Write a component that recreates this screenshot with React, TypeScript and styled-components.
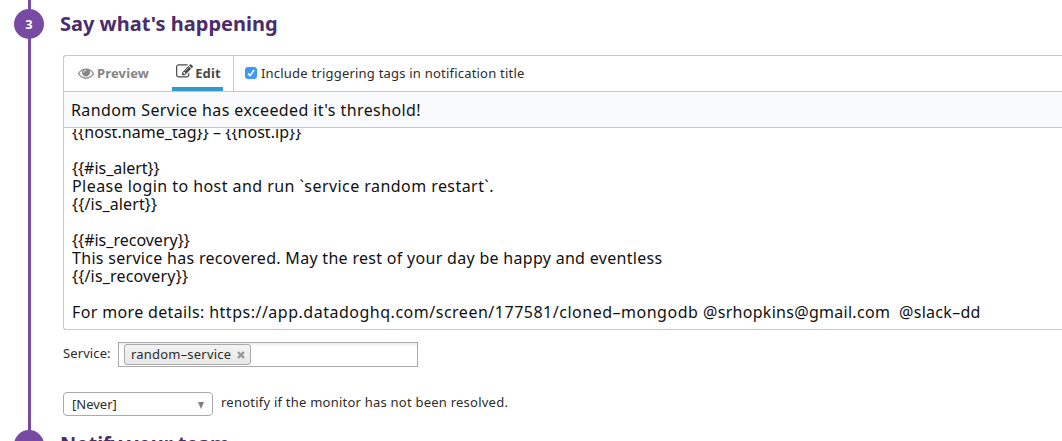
import React from 'react';
import styled, { createGlobalStyle, css } from 'styled-components';

const Global = createGlobalStyle`
  * { box-sizing: border-box; }
  html, body { margin: 0; height: 100%; overflow: hidden; background: #fff; }
  body { font-family: 'Noto Sans', 'Open Sans', sans-serif; font-size: 13px; color: #2c2c2c; }
`;

const Steps = styled.main`
  height: 441px;
  padding-top: 9px;
  overflow: hidden;
  background: linear-gradient(#774aa4, #774aa4) 28px 0 / 3px 100% no-repeat;
`;

const Step = styled.section`
  display: grid;
  grid-template-columns: 46px 1fr;
  padding-left: 14px;
  height: 421px;
`;

const StepNumber = styled.span`
  display: flex;
  align-items: center;
  justify-content: center;
  width: 30px;
  height: 30px;
  border-radius: 50%;
  background: #774aa4;
  color: #fff;
  font-size: 13px;
  font-weight: 700;
`;

const Heading = styled.h2`
  margin: 0;
  font-size: 20px;
  line-height: 30px;
  font-weight: 700;
  color: #4b2c6c;
`;

const TeamHeading = styled(Heading)`
  line-height: 28px;
  letter-spacing: -0.1px;
`;

const StepBody = styled.div`
  padding-left: 3px;
`;

const Editor = styled.div`
  margin-top: 16px;
  height: 275px;
  border: 1px solid #c8c8c8;
  border-right: 0;
  border-radius: 3px 0 0 3px;
  overflow: hidden;
`;

const Toolbar = styled.div`
  display: flex;
  height: 36px;
  border-bottom: 1px solid #c8c8c8;
`;

const Tabs = styled.div`
  display: flex;
  width: 170px;
  padding-left: 12px;
  border-right: 1px solid #c8c8c8;
`;

const Tab = styled.div<{ $active?: boolean }>`
  display: flex;
  align-items: center;
  height: 35px;
  padding: 0 3px 2px 2px;
  font-weight: 700;
  color: #858585;
  letter-spacing: 0.15px;
  ${(p) =>
    p.$active &&
    css`
      margin-left: 20px;
      padding: 2px 2px 0 4px;
      color: #4a4a4a;
      border-bottom: 4px solid #3299cc;
    `}
`;

const EyeIcon = styled.svg`
  width: 16px;
  height: 16px;
  margin-right: 3px;
  fill: currentColor;
`;

const PencilIcon = styled.svg`
  width: 17px;
  height: 17px;
  margin: -2px 2px 0 0;
  fill: currentColor;
`;

const Option = styled.label`
  display: flex;
  align-items: center;
  padding: 0 0 2px 11px;
  letter-spacing: 0.21px;
`;

const Check = styled.span`
  display: flex;
  align-items: center;
  justify-content: center;
  width: 12px;
  height: 12px;
  margin-right: 4px;
  border-radius: 3px;
  background: #3b99fc;
`;

const TitleField = styled.div`
  height: 36px;
  padding-left: 7px;
  border-bottom: 1px solid #c8c8c8;
  background: #f9fafc;
  color: #111;
  font-size: 16px;
  line-height: 36px;
  letter-spacing: 0.4px;
`;

const Message = styled.div`
  margin-top: 1px;
  height: 200px;
  overflow: hidden;
  padding-left: 8px;
  color: #111;
  font-size: 16px;
`;

const Lines = styled.div`
  margin-top: -6px;
`;

const Line = styled.div`
  height: 18px;
  line-height: 18px;
  white-space: pre;
`;

const Run = styled.span<{ $tracking: number }>`
  letter-spacing: ${(p) => p.$tracking}px;
`;

const ServiceRow = styled.div`
  display: flex;
  margin-top: 12px;
  height: 25px;
`;

const ServiceLabel = styled.span`
  width: 55px;
  line-height: 23px;
  letter-spacing: 0.1px;
`;

const TokenInput = styled.div`
  width: 300px;
  height: 25px;
  padding: 1px 5px;
  border: 1px solid #aaa;
  background: linear-gradient(#eee 0, #fff 4px);
`;

const Token = styled.span`
  display: inline-flex;
  align-items: center;
  width: 127px;
  height: 21px;
  padding-left: 6px;
  border: 1px solid #aaa;
  border-radius: 3px;
  background: linear-gradient(#f3f3f3, #e9e9e9);
  letter-spacing: 0.2px;
  line-height: 19px;
`;

const Remove = styled.svg`
  width: 8px;
  height: 8px;
  margin-left: 6px;
  stroke: #969696;
  stroke-width: 2.4;
`;

const RenotifyRow = styled.div`
  display: flex;
  margin-top: 25px;
`;

const Select = styled.div`
  display: flex;
  align-items: center;
  justify-content: space-between;
  width: 150px;
  height: 24px;
  padding: 0 8px;
  border: 1px solid #aaa;
  border-radius: 4px;
`;

const Arrow = styled.svg`
  width: 6px;
  height: 7px;
  margin-top: 2px;
  fill: #808080;
`;

const Hint = styled.span`
  margin-left: 8px;
  line-height: 21px;
  letter-spacing: 0.23px;
`;

type TextRun = [text: string, tracking: number];

const message: TextRun[][] = [
  [['{{host.name_tag}} – {{host.ip}}', 0.04]],
  [],
  [['{{#is_alert}}', -0.03]],
  [['Please login to host and run `service random restart`.', 0.44]],
  [['{{/is_alert}}', 0.12]],
  [],
  [['{{#is_recovery}}', 0]],
  [['This service has recovered. May the rest of your day be happy and eventless', 0.3]],
  [['{{/is_recovery}}', 0.17]],
  [],
  [
    ['For more details: ', 0.35],
    ['https://app.datadoghq.com/screen/177581/cloned–mongodb ', 0.51],
    ['@srhopkins@gmail.com  @slack–dd', 0.29],
  ],
];

export default function App() {
  return (
    <>
      <Global />
      <Steps>
        <Step>
          <StepNumber>3</StepNumber>
          <div>
            <Heading>Say what's happening</Heading>
            <StepBody>
              <Editor>
                <Toolbar>
                  <Tabs>
                    <Tab>
                      <EyeIcon viewBox="0 0 1792 1792">
                        <path d="M1664 960q-152-236-381-353 61 104 61 225 0 185-131.5 316.5t-316.5 131.5-316.5-131.5-131.5-316.5q0-121 61-225-229 117-381 353 133 205 333.5 326.5t434.5 121.5 434.5-121.5 333.5-326.5zm-720-384q0-20-14-34t-34-14q-125 0-214.5 89.5t-89.5 214.5q0 20 14 34t34 14 34-14 14-34q0-86 61-147t147-61q20 0 34-14t14-34zm848 384q0 34-20 69-140 230-376.5 368.5t-499.5 138.5-499.5-139-376.5-368q-20-35-20-69t20-69q140-229 376.5-368t499.5-139 499.5 139 376.5 368q20 35 20 69z" />
                      </EyeIcon>
                      Preview
                    </Tab>
                    <Tab $active>
                      <PencilIcon viewBox="0 0 1792 1792">
                        <path d="M888 1184l116-116-152-152-116 116v56h96v96h56zm440-720q-16-16-33 1l-350 350q-17 17-1 33t33-1l350-350q17-17 1-33zm80 594v190q0 119-84.5 203.5t-203.5 84.5h-832q-119 0-203.5-84.5t-84.5-203.5v-832q0-119 84.5-203.5t203.5-84.5h832q63 0 117 25 15 7 18 23 3 17-9 29l-49 49q-14 14-32 8-23-6-45-6h-832q-66 0-113 47t-47 113v832q0 66 47 113t113 47h832q66 0 113-47t47-113v-126q0-13 9-22l64-64q15-15 35-7t20 29zm-96-738l288 288-672 672h-288v-288zm444 132l-92 92-288-288 92-92q28-28 68-28t68 28l152 152q28 28 28 68t-28 68z" />
                      </PencilIcon>
                      Edit
                    </Tab>
                  </Tabs>
                  <Option>
                    <Check>
                      <svg width="8" height="8" viewBox="0 0 8 8" fill="none" stroke="#fff" strokeWidth="1.6">
                        <path d="M1 4.4L3.1 6.6L7 1" />
                      </svg>
                    </Check>
                    Include triggering tags in notification title
                  </Option>
                </Toolbar>
                <TitleField>Random Service has exceeded it's threshold!</TitleField>
                <Message>
                  <Lines>
                    {message.map((runs, i) => (
                      <Line key={i}>
                        {runs.map(([text, tracking]) => (
                          <Run key={text} $tracking={tracking}>
                            {text}
                          </Run>
                        ))}
                      </Line>
                    ))}
                  </Lines>
                </Message>
              </Editor>
              <ServiceRow>
                <ServiceLabel>Service:</ServiceLabel>
                <TokenInput>
                  <Token>
                    random–service
                    <Remove viewBox="0 0 8 8">
                      <path d="M1 1L7 7M7 1L1 7" />
                    </Remove>
                  </Token>
                </TokenInput>
              </ServiceRow>
              <RenotifyRow>
                <Select>
                  [Never]
                  <Arrow viewBox="0 0 7 7" preserveAspectRatio="none">
                    <path d="M0 0H7L3.5 7Z" />
                  </Arrow>
                </Select>
                <Hint>renotify if the monitor has not been resolved.</Hint>
              </RenotifyRow>
            </StepBody>
          </div>
        </Step>
        <Step>
          <StepNumber>4</StepNumber>
          <TeamHeading>Notify your team</TeamHeading>
        </Step>
      </Steps>
    </>
  );
}
